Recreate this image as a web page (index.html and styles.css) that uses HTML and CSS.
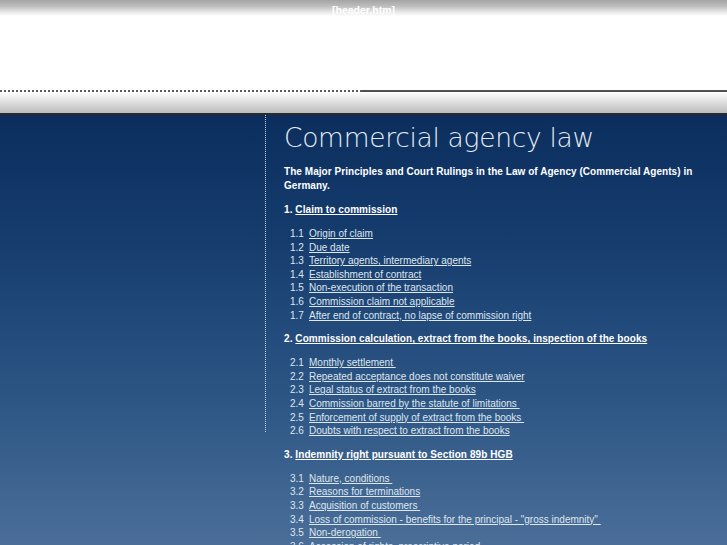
FILE: index.html
```html
<!DOCTYPE html>
<html>
<head>
<meta charset="utf-8">
<link rel="stylesheet" href="styles.css">
</head>
<body>
<div class="top">
  <div class="topbar"><span class="hdr">[header.htm]</span></div>
  <div class="topwhite"></div>
  <div class="rule"><div class="dots"></div><div class="solid"></div></div>
  <div class="shade"></div>
</div>
<div class="main">
  <div class="side"><div class="vline"></div></div>
  <div class="content">
    <h1 class="title">Commercial agency law</h1>
    <p class="intro">The Major Principles and Court Rulings in the Law of Agency (Commercial Agents) in Germany.</p>

    <div class="sec"><span class="num">1.</span> <a href="#">Claim to commission</a></div>
    <ul class="items">
      <li><span class="n">1.1</span><a href="#">Origin of claim</a></li>
      <li><span class="n">1.2</span><a href="#">Due date</a></li>
      <li><span class="n">1.3</span><a href="#">Territory agents, intermediary agents</a></li>
      <li><span class="n">1.4</span><a href="#">Establishment of contract</a></li>
      <li><span class="n">1.5</span><a href="#">Non-execution of the transaction</a></li>
      <li><span class="n">1.6</span><a href="#">Commission claim not applicable</a></li>
      <li><span class="n">1.7</span><a href="#">After end of contract, no lapse of commission right</a></li>
    </ul>

    <div class="sec"><span class="num">2.</span> <a href="#">Commission calculation, extract from the books, inspection of the books</a></div>
    <ul class="items">
      <li><span class="n">2.1</span><a href="#">Monthly settlement </a></li>
      <li><span class="n">2.2</span><a href="#">Repeated acceptance does not constitute waiver</a></li>
      <li><span class="n">2.3</span><a href="#">Legal status of extract from the books</a></li>
      <li><span class="n">2.4</span><a href="#">Commission barred by the statute of limitations </a></li>
      <li><span class="n">2.5</span><a href="#">Enforcement of supply of extract from the books </a></li>
      <li><span class="n">2.6</span><a href="#">Doubts with respect to extract from the books</a></li>
    </ul>

    <div class="sec"><span class="num">3.</span> <a href="#">Indemnity right pursuant to Section 89b HGB</a></div>
    <ul class="items">
      <li><span class="n">3.1</span><a href="#">Nature, conditions </a></li>
      <li><span class="n">3.2</span><a href="#">Reasons for terminations</a></li>
      <li><span class="n">3.3</span><a href="#">Acquisition of customers </a></li>
      <li><span class="n">3.4</span><a href="#">Loss of commission - benefits for the principal - "gross indemnity" </a></li>
      <li><span class="n">3.5</span><a href="#">Non-derogation </a></li>
      <li><span class="n">3.6</span><a href="#">Accession of rights, prescriptive period</a></li>
    </ul>
  </div>
</div>
</body>
</html>
```

FILE: styles.css
```css
html, body {
  margin: 0;
  padding: 0;
  height: 100%;
  overflow: hidden;
}
body {
  font-family: "Liberation Sans", Arial, sans-serif;
  background: #2c5282;
}
.top {
  background: #ffffff;
}
.topbar {
  height: 16px;
  background: linear-gradient(#a4a4a4 0px, #bcbcbc 6px, #e0e0e0 11px, #ffffff 16px);
  text-align: center;
}
.hdr {
  display: inline-block;
  font-size: 10.5px;
  font-weight: bold;
  color: #ffffff;
  line-height: 13px;
}
.topwhite {
  height: 74px;
  background: #ffffff;
}
.rule {
  display: flex;
  height: 2px;
}
.dots {
  width: 362px;
  border-top: 2px dotted #5a5a5a;
}
.solid {
  flex: 1;
  border-top: 2px solid #505050;
}
.shade {
  height: 21px;
  background: linear-gradient(#ffffff 0px, #ececec 6px, #d2d2d2 14px, #bcbcbc 21px);
  border-bottom: 2px solid #2a2a2a;
}
.main {
  display: flex;
  min-height: 430px;
  background: linear-gradient(#0b2e5e 0px, #163d6e 130px, #2c5584 280px, #4a6e98 430px);
}
.side {
  width: 266px;
  flex: none;
  display: flex;
  justify-content: flex-end;
}
.vline {
  width: 0;
  height: 317px;
  border-right: 1px dotted #c8d2de;
}
.content {
  padding-left: 18px;
  padding-top: 6px;
  color: #ffffff;
}
.title {
  margin: 0;
  font-family: "DejaVu Sans", sans-serif;
  font-weight: 200;
  font-size: 26.5px;
  line-height: 34px;
  color: #e6ecf2;
  letter-spacing: -0.3px;
}
.intro {
  margin: 10px 0 0;
  font-size: 10px;
  font-weight: bold;
  line-height: 14px;
  width: 420px;
  letter-spacing: 0.05px;
}
.sec {
  margin-top: 10px;
  font-size: 10px;
  font-weight: bold;
  line-height: 14px;
  letter-spacing: 0.08px;
}
.sec a {
  color: #ffffff;
}
.items {
  list-style: none;
  margin: 10px 0 10px;
  padding: 0 0 0 6px;
}
.items li {
  font-size: 10px;
  line-height: 13.6px;
  color: #dfe6ee;
  display: flex;
}
.n {
  width: 19px;
  flex: none;
}
.items a {
  color: #dfe6ee;
  white-space: pre;
}
```
